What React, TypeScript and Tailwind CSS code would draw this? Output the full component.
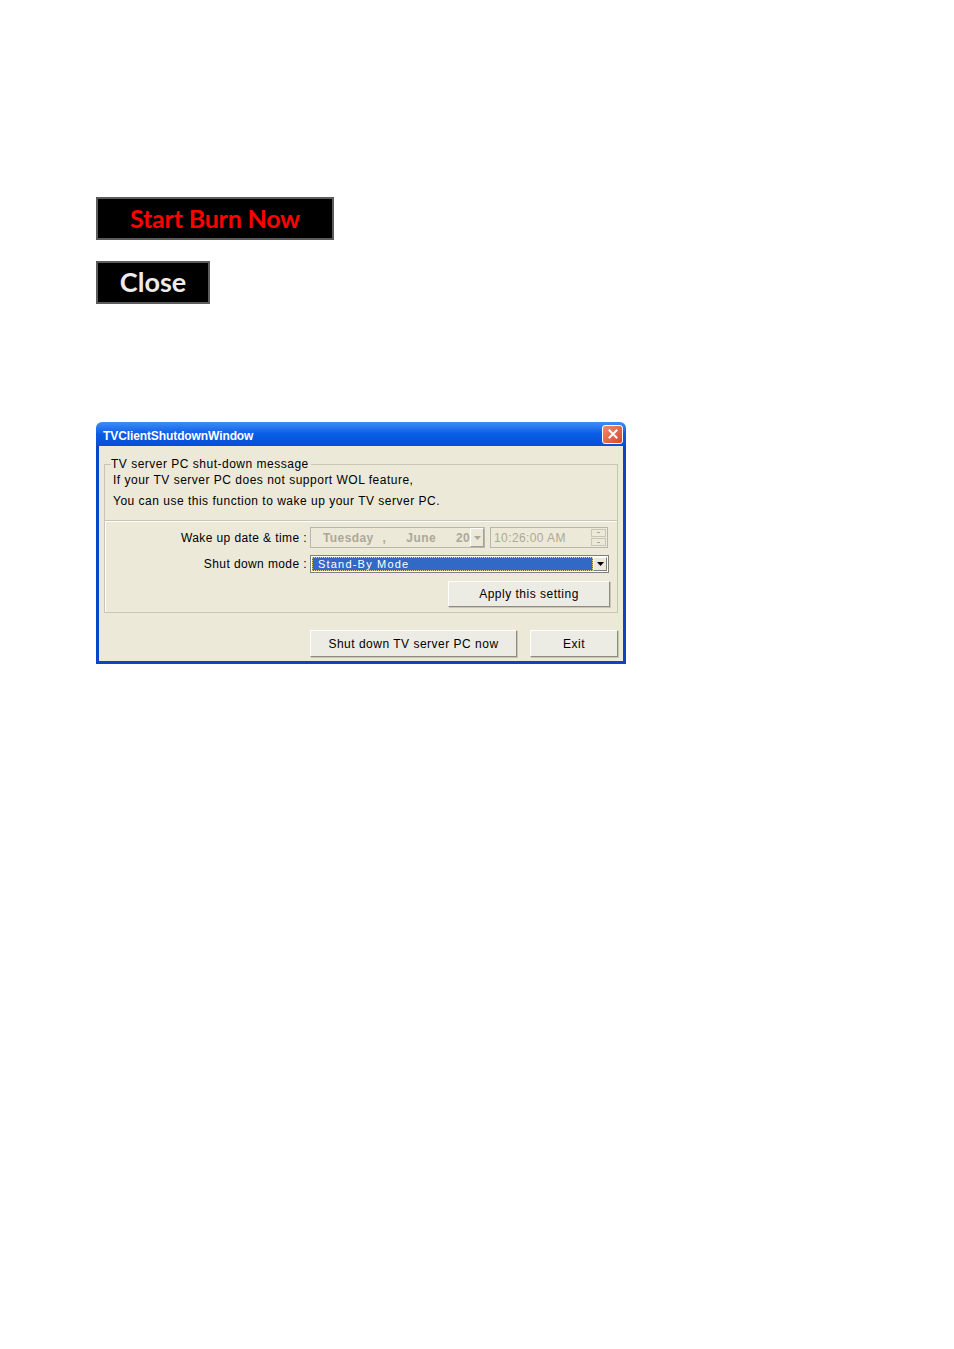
const ui = { fontFamily: '"Liberation Sans", Arial, sans-serif' }

function DownArrow({ color = '#4d4d4d' }: { color?: string }) {
  return (
    <svg width="7" height="4" viewBox="0 0 7 4">
      <path d="M0 0h7L3.5 4z" fill={color} />
    </svg>
  )
}

function WinButton({ label, className }: { label: string; className: string }) {
  return (
    <div
      className={`flex items-center justify-center bg-[#ecebe4] text-[12px] tracking-[0.5px] text-black border border-t-white border-l-white border-b-[#8e8c80] border-r-[#8e8c80] shadow-[1px_1px_0_#c9c6b8] ${className}`}
    >
      {label}
    </div>
  )
}

export default function App() {
  return (
    <div className="min-h-[1349px] bg-white pl-[96px] pt-[197px]" style={ui}>
      <div
        className="flex h-[43px] w-[238px] items-center justify-center border-2 border-[#5c5c5c] bg-black text-[25px] font-bold tracking-[-0.2px] text-[#ff0000]"
        style={{ fontFamily: 'Lato, "Liberation Sans", sans-serif' }}
      >
        Start Burn Now
      </div>
      <div
        className="mt-[21px] flex h-[43px] w-[114px] items-center justify-center border-2 border-[#5c5c5c] bg-black text-[27px] font-bold tracking-[0px] text-[#ececec]"
        style={{ fontFamily: 'Lato, "Liberation Sans", sans-serif' }}
      >
        Close
      </div>

      <div className="mt-[118px] w-[530px]">
        {/* title bar */}
        <div className="flex h-[24px] items-center justify-between rounded-t-[6px] bg-gradient-to-b from-[#3d8ef7] via-[#0a5ce6] to-[#0650d6] pl-[7px] pr-[3px]">
          <span className="pt-[3px] text-[12px] font-bold tracking-[-0.1px] text-white">TVClientShutdownWindow</span>
          <div className="flex h-[19px] w-[21px] items-center justify-center rounded-[3px] border border-white bg-gradient-to-br from-[#f08a6c] to-[#d8442a]">
            <svg width="10" height="10" viewBox="0 0 10 10">
              <path d="M1.5 1.5l7 7M8.5 1.5l-7 7" stroke="white" strokeWidth="2" strokeLinecap="square" />
            </svg>
          </div>
        </div>

        {/* body */}
        <div className="h-[218px] border-x-[3px] border-b-[3px] border-x-[#0846c4] border-b-[#0846c4] bg-[#ece9d8] px-[5px] pt-[12px]">
          <fieldset className="border-x border-t border-[#c8c5b4] pb-[8px] pl-[8px] text-[12px] tracking-[0.5px] text-black">
            <legend className="ml-[-2px] pr-[2px] leading-[13px]">TV server PC shut-down message</legend>
            <div className="leading-[21px]">
              <div className="mt-[-1px]">If your TV server PC does not support WOL feature,</div>
              <div>You can use this function to wake up your TV server PC.</div>
            </div>
          </fieldset>

          <div className="border border-[#c8c5b4] pb-[5px] pt-[6px] text-[12px] tracking-[0.4px] text-black shadow-[inset_1px_1px_0_white]">
            <div className="flex items-center">
              <div className="w-[203px] pr-[1px] text-right">Wake up date &amp; time :</div>
              <div className="ml-[2px] flex h-[21px] w-[175px] items-center border border-[#b9b7ab] font-bold text-[#aca899]">
                <span className="ml-[12px]">Tuesday</span>
                <span className="ml-[9px]">,</span>
                <span className="ml-[20px]">June</span>
                <span className="ml-[20px]">20</span>
                <div className="ml-auto flex h-[19px] w-[15px] items-center justify-center border border-t-white border-l-white border-b-[#a19f93] border-r-[#a19f93] bg-[#ece9d8]">
                  <DownArrow color="#aca899" />
                </div>
              </div>
              <div className="ml-[5px] flex h-[21px] w-[118px] items-center border border-[#b9b7ab] pl-[3px] text-[#aca899]">
                <span>10:26:00 AM</span>
                <div className="ml-auto mr-[1px] flex flex-col gap-[1px]">
                  <div className="flex h-[8px] w-[15px] items-start justify-center border border-[#c9c6b8] bg-[#ece9d8]">
                    <div className="mt-[2px] h-px w-[3px] bg-[#aca899]" />
                  </div>
                  <div className="flex h-[8px] w-[15px] items-end justify-center border border-[#c9c6b8] bg-[#ece9d8]">
                    <div className="mb-[2px] h-px w-[3px] bg-[#aca899]" />
                  </div>
                </div>
              </div>
            </div>

            <div className="mt-[7px] flex items-center">
              <div className="w-[203px] pr-[1px] text-right">Shut down mode :</div>
              <div className="ml-[2px] flex h-[18px] w-[299px] items-stretch border border-[#7f7f7f] bg-white p-px">
                <div className="flex flex-1 items-center border border-dotted border-[#e0d080] bg-[#316ac5] pl-[5px] text-[11px] tracking-[1.2px] text-white">
                  Stand-By Mode
                </div>
                <div className="flex w-[14px] items-center justify-center border border-t-white border-l-white border-b-[#7f7f7f] border-r-[#7f7f7f] bg-[#ece9d8]">
                  <DownArrow color="#000" />
                </div>
              </div>
            </div>

            <div className="mt-[8px] flex justify-end pr-[7px]">
              <WinButton label="Apply this setting" className="h-[26px] w-[162px]" />
            </div>
          </div>

          <div className="mt-[17px] flex justify-end gap-[13px]">
            <WinButton label="Shut down TV server PC now" className="h-[27px] w-[207px]" />
            <WinButton label="Exit" className="h-[27px] w-[88px]" />
          </div>
        </div>
      </div>
    </div>
  )
}
